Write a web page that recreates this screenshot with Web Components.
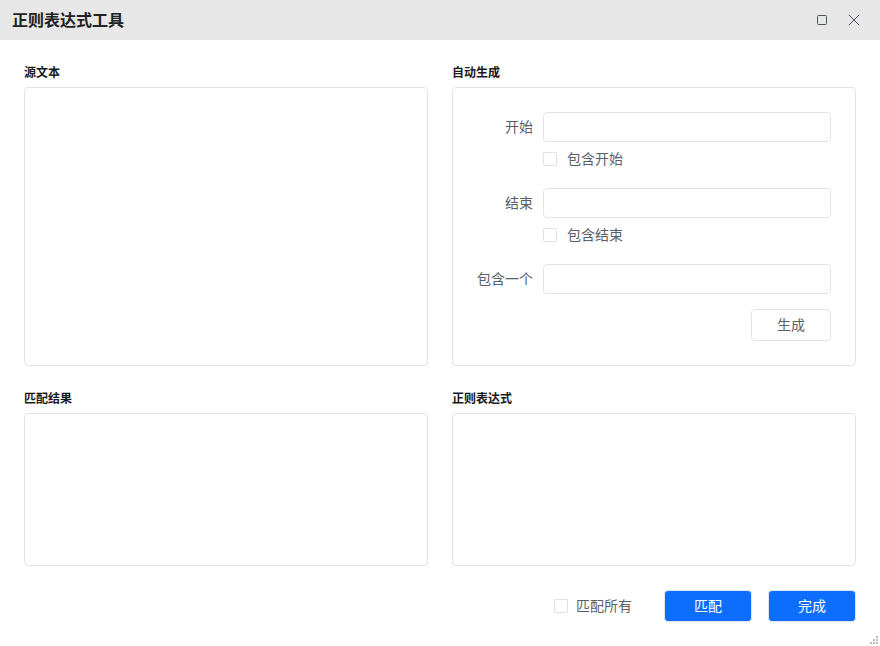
<!DOCTYPE html>
<html lang="zh">
<head>
<meta charset="utf-8">
<title>正则表达式工具</title>
<style>
html,body{margin:0;padding:0;background:#fff;}
body{width:880px;height:646px;overflow:hidden;font-family:"Noto Sans CJK SC","Liberation Sans",sans-serif;}
</style>
</head>
<body>
<regex-window></regex-window>
<script>
function def(name, css, html){
  customElements.define(name, class extends HTMLElement{
    constructor(){
      super();
      const r=this.attachShadow({mode:'open'});
      r.innerHTML='<style>'+css+'</style>'+(typeof html==='function'?html(this):html);
    }
  });
}
def('title-bar',
 `:host{display:flex;align-items:center;height:40px;background:#e7e7e7;padding:0 20px 0 12px;box-sizing:border-box;}
  .t{flex:1;font-size:16px;font-weight:700;color:#222;line-height:38px;height:40px;}
  .btns{display:flex;align-items:center;gap:20px;}
  svg{display:block;}`,
 `<div class="t"><slot></slot></div>
  <div class="btns">
   <svg width="12" height="12" viewBox="0 0 12 12" fill="none"><rect x="1.5" y="1.5" width="9" height="9" rx="1" stroke="#4a5060" stroke-width="1"/></svg>
   <svg width="12" height="12" viewBox="0 0 12 12" fill="none"><path d="M.8.8 11.2 11.2M11.2.8.8 11.2" stroke="#4a5060" stroke-width="1"/></svg>
  </div>`);
def('field-panel',
 `:host{display:flex;flex-direction:column;min-width:0;}
  .l{height:16px;line-height:16px;font-size:12px;font-weight:700;color:#1a1a1a;margin-bottom:7px;}
  .b{flex:1;box-sizing:border-box;border:1px solid #e4e4e8;border-radius:4px;background:#fff;}`,
 el=>`<div class="l">${el.getAttribute('label')}</div><div class="b"><slot></slot></div>`);
def('check-box',
 `:host{display:inline-flex;align-items:center;font-size:14px;color:#5a5e66;height:20px;}
  .c{width:14px;height:14px;box-sizing:border-box;border:1px solid #dfe1e6;border-radius:2px;background:#fff;flex:none;}
  .s{margin-left:var(--check-gap,10px);line-height:18px;height:20px;}`,
 `<span class="c"></span><span class="s"><slot></slot></span>`);
def('text-input',
 `:host{display:block;height:30px;box-sizing:border-box;border:1px solid #e4e4e8;border-radius:4px;background:#fff;}`,
 ``);
def('form-row',
 `:host{display:grid;grid-template-columns:66px 288px;column-gap:10px;align-items:start;font-size:14px;color:#5a5e66;}
  .l{text-align:right;white-space:nowrap;line-height:28px;}
  .sub{grid-column:2;margin-top:7px;height:20px;display:flex;align-items:center;}`,
 el=>{
   const c=el.getAttribute('check');
   return `<div class="l">${el.getAttribute('label')}</div><text-input></text-input>`+
     (c?`<div class="sub"><check-box>${c}</check-box></div>`:'');
 });
def('ui-button',
 `:host{display:inline-flex;align-items:center;justify-content:center;box-sizing:border-box;border-radius:4px;font-size:14px;height:32px;padding-bottom:2px;}
  :host([kind=plain]){width:80px;border:1px solid #e4e4e8;background:#fff;color:#5a5e66;}
  :host([kind=primary]){width:88px;background:#0d6efd;border:1px solid #dfe6f2;color:#fff;}`,
 `<slot></slot>`);
def('auto-form',
 `:host{display:flex;flex-direction:column;padding:24px 24px 0 14px;}
  .g{margin-bottom:19px;}
  .end{display:flex;justify-content:flex-end;margin-top:15px;}`,
 `<form-row class="g" label="开始" check="包含开始"></form-row>
  <form-row class="g" label="结束" check="包含结束"></form-row>
  <form-row label="包含一个"></form-row>
  <div class="end"><ui-button kind="plain">生成</ui-button></div>`);
def('regex-window',
 `:host{display:block;position:relative;width:880px;height:646px;background:#fff;font-family:"Noto Sans CJK SC","Liberation Sans",sans-serif;}
  .main{padding:24px 24px 0;display:grid;grid-template-columns:404px 404px;grid-template-rows:302px 176px;column-gap:24px;row-gap:24px;}
  .foot{display:flex;align-items:center;justify-content:flex-end;padding:24px 24px 0;gap:16px;}
  .foot check-box{margin-right:16px;--check-gap:8px;}
  .grip{position:absolute;right:2px;bottom:2px;display:block;}`,
 `<title-bar>正则表达式工具</title-bar>
  <div class="main">
    <field-panel label="源文本"></field-panel>
    <field-panel label="自动生成"><auto-form></auto-form></field-panel>
    <field-panel label="匹配结果"></field-panel>
    <field-panel label="正则表达式"></field-panel>
  </div>
  <div class="foot">
    <check-box>匹配所有</check-box>
    <ui-button kind="primary">匹配</ui-button>
    <ui-button kind="primary">完成</ui-button>
  </div>
  <svg class="grip" width="8" height="8" viewBox="0 0 8 8" fill="#bdbdbd"><rect x="6" y="0" width="2" height="2"/><rect x="3" y="3" width="2" height="2"/><rect x="6" y="3" width="2" height="2"/><rect x="0" y="6" width="2" height="2"/><rect x="3" y="6" width="2" height="2"/><rect x="6" y="6" width="2" height="2"/></svg>`);
</script>
</body>
</html>
